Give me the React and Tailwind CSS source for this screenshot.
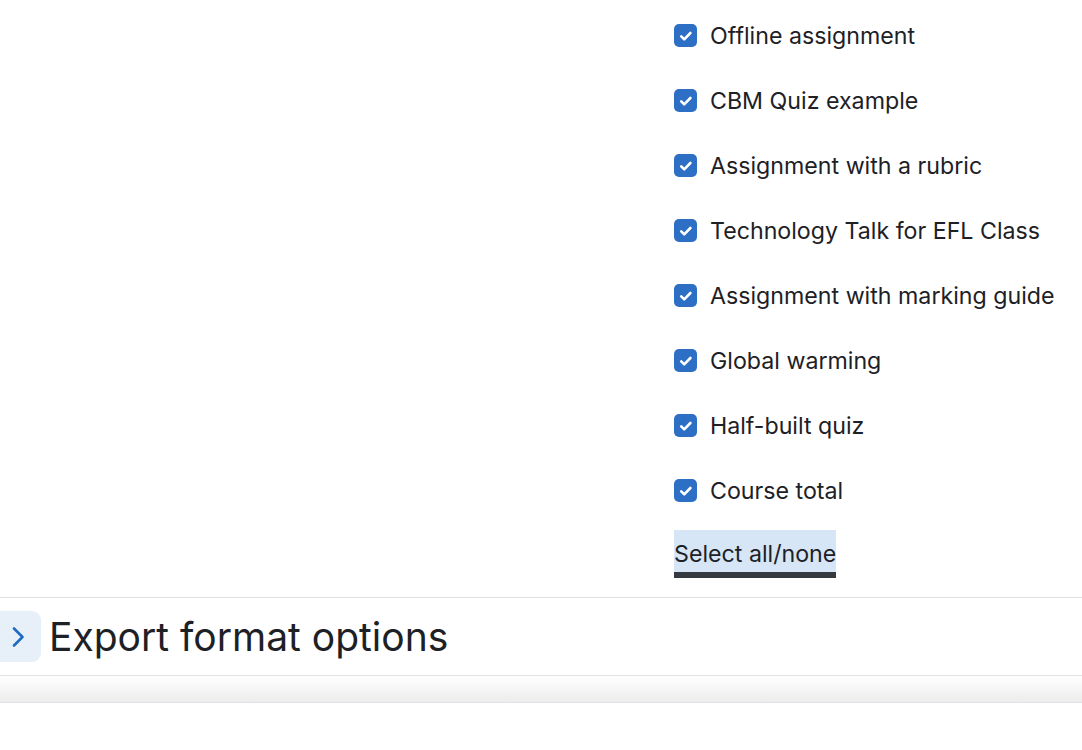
import React from "react";

const items = [
  "Offline assignment",
  "CBM Quiz example",
  "Assignment with a rubric",
  "Technology Talk for EFL Class",
  "Assignment with marking guide",
  "Global warming",
  "Half-built quiz",
  "Course total",
];

function Check() {
  return (
    <span className="flex h-[23px] w-[23px] shrink-0 items-center justify-center rounded-[5px] bg-[#2d6fc4]">
      <svg width="16" height="16" viewBox="0 0 16 16" fill="none">
        <path d="M3.2 8.4l3 2.9 6.2-6.3" stroke="white" strokeWidth="2.6" strokeLinecap="round" strokeLinejoin="round" />
      </svg>
    </span>
  );
}

export default function App() {
  return (
    <div className="min-h-[750px] w-[1082px] bg-white text-[#1d2125]" style={{ fontFamily: "Inter, 'Noto Sans', sans-serif" }}>
      <div className="flex pt-[3px]">
        <div className="w-[674px] shrink-0" />
        <div className="flex flex-col">
          {items.map((t) => (
            <label key={t} className="flex h-[65px] items-center gap-[13px] text-[23.2px]">
              <Check />
              <span className="pt-[2px]">{t}</span>
            </label>
          ))}
          <div className="mt-[7px] flex">
            <a className="block h-[48px] border-b-[6px] border-[#343a40] bg-[#d6e6f7] pt-[9px] text-[23.2px] leading-[30px] text-[#1d2125]">
              Select all/none
            </a>
          </div>
        </div>
      </div>
      <div className="mt-[19px] border-t border-[#dee2e6]">
        <div className="flex h-[77px] items-center gap-[8px]">
          <span className="flex h-[51px] w-[41px] items-center justify-center rounded-r-[9px] bg-[#e7eff9]">
            <svg width="18" height="22" viewBox="0 0 18 22" fill="none" className="ml-[-6px]">
              <path d="M5 2.5l8.5 8.5-8.5 8.5" stroke="#1f6bc1" strokeWidth="2.6" strokeLinecap="round" strokeLinejoin="round" />
            </svg>
          </span>
          <h3 className="text-[39px] font-normal leading-none text-[#1d2125]">Export format options</h3>
        </div>
        <div className="h-[28px] border-y border-[#dee2e6] bg-gradient-to-b from-[#ffffff] to-[#ececec]" />
      </div>
    </div>
  );
}
